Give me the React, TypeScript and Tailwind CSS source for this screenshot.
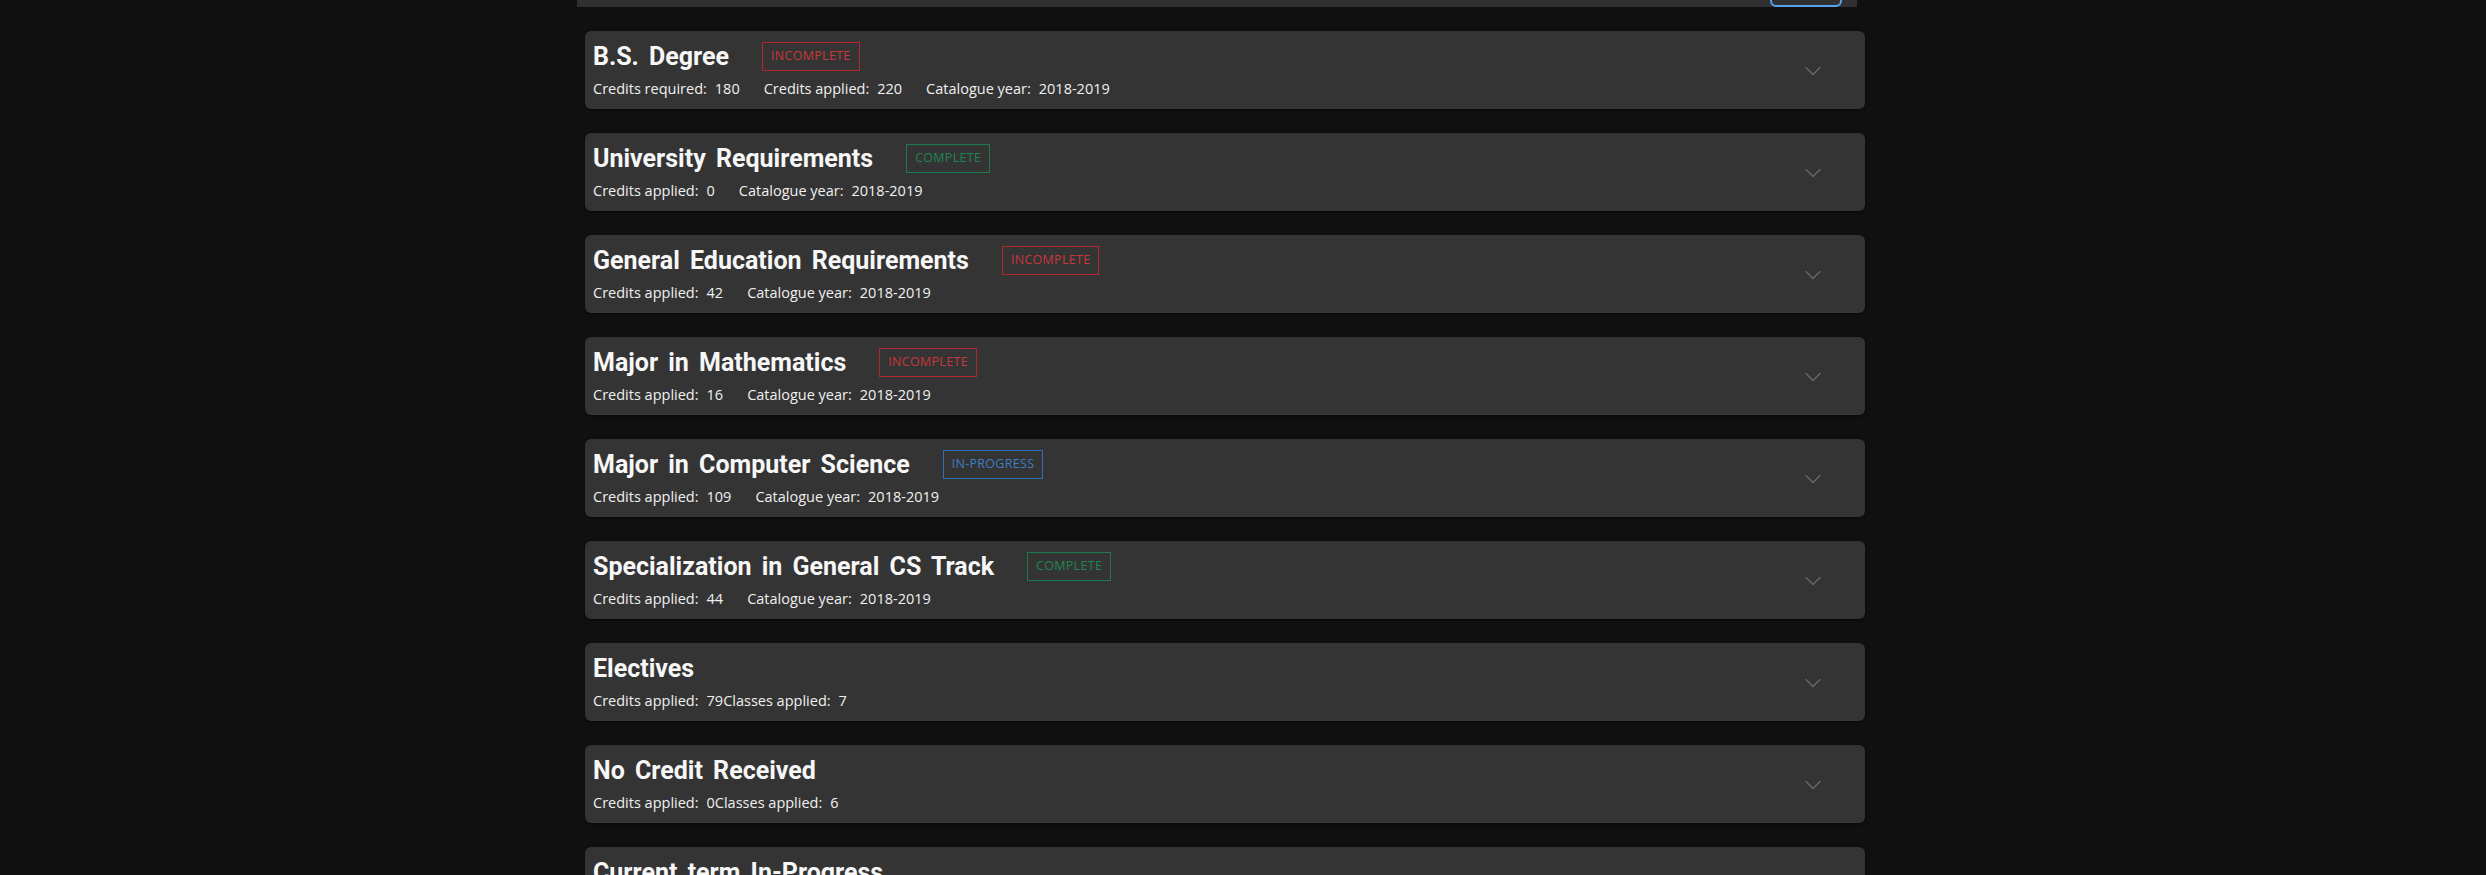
import { ChevronDown } from "lucide-react";

type Status = "INCOMPLETE" | "COMPLETE" | "IN-PROGRESS";

interface Stat {
  label: string;
  value: string;
}

interface Requirement {
  title: string;
  status?: Status;
  stats: Stat[];
  joined?: boolean;
}

const requirements: Requirement[] = [
  {
    title: "B.S. Degree",
    status: "INCOMPLETE",
    stats: [
      { label: "Credits required:", value: "180" },
      { label: "Credits applied:", value: "220" },
      { label: "Catalogue year:", value: "2018-2019" },
    ],
  },
  {
    title: "University Requirements",
    status: "COMPLETE",
    stats: [
      { label: "Credits applied:", value: "0" },
      { label: "Catalogue year:", value: "2018-2019" },
    ],
  },
  {
    title: "General Education Requirements",
    status: "INCOMPLETE",
    stats: [
      { label: "Credits applied:", value: "42" },
      { label: "Catalogue year:", value: "2018-2019" },
    ],
  },
  {
    title: "Major in Mathematics",
    status: "INCOMPLETE",
    stats: [
      { label: "Credits applied:", value: "16" },
      { label: "Catalogue year:", value: "2018-2019" },
    ],
  },
  {
    title: "Major in Computer Science",
    status: "IN-PROGRESS",
    stats: [
      { label: "Credits applied:", value: "109" },
      { label: "Catalogue year:", value: "2018-2019" },
    ],
  },
  {
    title: "Specialization in General CS Track",
    status: "COMPLETE",
    stats: [
      { label: "Credits applied:", value: "44" },
      { label: "Catalogue year:", value: "2018-2019" },
    ],
  },
  {
    title: "Electives",
    joined: true,
    stats: [
      { label: "Credits applied:", value: "79" },
      { label: "Classes applied:", value: "7" },
    ],
  },
  {
    title: "No Credit Received",
    joined: true,
    stats: [
      { label: "Credits applied:", value: "0" },
      { label: "Classes applied:", value: "6" },
    ],
  },
  {
    title: "Current term In-Progress",
    joined: true,
    stats: [{ label: "Classes applied:", value: "3" }],
  },
];

const badgeClass: Record<Status, string> = {
  INCOMPLETE: "border-[#b3262c] text-[#c8383d]",
  COMPLETE: "border-[#1d7a4c] text-[#1f8552]",
  "IN-PROGRESS": "border-[#2f6fb5] text-[#3d7fc4]",
};

function StatusBadge({ status }: { status: Status }) {
  return (
    <span
      className={`h-[29px] flex items-center px-[8px] border text-[12.5px] tracking-[0.3px] font-['Open_Sans',sans-serif] ${badgeClass[status]}`}
    >
      {status}
    </span>
  );
}

function RequirementCard({ title, status, stats, joined }: Requirement) {
  return (
    <div className="flex items-center justify-between bg-[#343434] rounded-md h-[78px] pl-[8px] pr-[38px] shadow-[0_1px_3px_rgba(0,0,0,0.5)]">
      <div className="flex flex-col">
        <div className="flex items-center h-[29px] mt-[1px]">
          <h2 className="text-[25px] leading-[28px] font-bold text-[#f7f7f7] font-['Roboto',sans-serif] [word-spacing:4px] mr-[33px]">
            {title}
          </h2>
          {status && <StatusBadge status={status} />}
        </div>
        <div className="flex mt-[8px] h-[20px] text-[14.5px] leading-[20px] text-[#f0f0f0] font-['Open_Sans',sans-serif]">
          {stats.map((s, i) => (
            <span key={i} className={joined ? "" : "mr-[24px]"}>
              {s.label}
              <span className="ml-[8px]">{s.value}</span>
            </span>
          ))}
        </div>
      </div>
      <ChevronDown size={28} strokeWidth={1.1} className="text-[#6a6a6a] mt-[2px]" />
    </div>
  );
}

export default function App() {
  return (
    <div className="min-h-screen bg-[#101010] overflow-hidden">
      <div className="ml-[577px] w-[1280px] h-[7px] bg-[#303030] overflow-hidden flex justify-end pr-[15px]">
        <div className="-mt-[22px] h-[29px] w-[72px] rounded-md border-2 border-[#56a0ee] text-[#56a0ee] text-[13px] leading-[25px] text-center font-['Open_Sans',sans-serif]">
          Expand
        </div>
      </div>
      <div className="ml-[585px] w-[1280px] flex flex-col gap-[24px] pt-[24px]">
        {requirements.map((r) => (
          <RequirementCard key={r.title} {...r} />
        ))}
      </div>
    </div>
  );
}
